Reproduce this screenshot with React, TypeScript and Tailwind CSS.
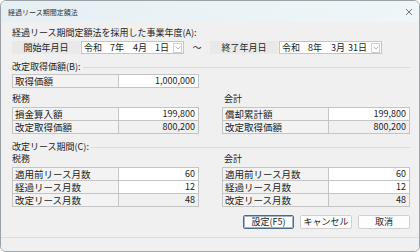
import React from "react";

const jp = { fontFamily: '"Noto Sans CJK JP", "Noto Sans", sans-serif' };

function Row({ label, value, ro, last }: { label: string; value: string; ro?: boolean; last?: boolean }) {
  return (
    <div className="flex h-[13px] border-b border-[#c4c4c4]">
      <div className="w-[106px] shrink-0 border-r border-[#c4c4c4] bg-[#f3f3f3] pl-[2px] text-[9.5px] leading-[12px] text-[#222]">{label}</div>
      <div className={"flex-1 pr-[3px] text-right text-[9px] leading-[12px] text-[#222] " + (ro ? "bg-[#f0f0f0]" : "bg-white")}>{value}</div>
    </div>
  );
}

function Table({ rows }: { rows: { label: string; value: string; ro?: boolean }[] }) {
  return (
    <div className="border-t border-x border-[#c4c4c4]">
      {rows.map((r, i) => (
        <Row key={i} {...r} />
      ))}
    </div>
  );
}

function GroupHeader({ text }: { text: string }) {
  return (
    <div className="flex h-[12px] items-center">
      <span className="text-[9px] leading-[12px] text-[#222]">{text}</span>
      <div className="ml-[2px] h-px flex-1 bg-[#dadada]" />
    </div>
  );
}

function DateBox({ y, m, d }: { y: string; m: string; d: string }) {
  return (
    <div className="flex h-[13px] w-[103px] items-center border border-[#c4c4c4] bg-white text-[9px] leading-[11px] text-[#222]">
      <span className="ml-[2px] w-[22px]">令和</span>
      <span className="w-[18px] whitespace-pre text-right">{y}年</span>
      <span className="w-[23px] whitespace-pre text-right">{m}月</span>
      <span className="w-[22px] whitespace-pre text-right">{d}日</span>
      <div className="ml-auto mr-[1px] flex h-[10px] w-[9px] items-center justify-center border border-[#cfcfcf] bg-white">
        <svg width="6" height="4" viewBox="0 0 6 4">
          <path d="M0.5 0.5 L3 3 L5.5 0.5" fill="none" stroke="#a0a0a0" strokeWidth="0.8" />
        </svg>
      </div>
    </div>
  );
}

function Label({ text }: { text: string }) {
  return (
    <div className="flex h-[13px] w-[68px] items-center justify-center bg-[#e9e9e9] text-[9px] leading-[12px] text-[#222]">
      {text}
    </div>
  );
}

export default function App() {
  return (
    <div style={jp} className="flex h-[252px] w-[420px] flex-col overflow-hidden rounded-[6px] border border-[#9aa2a8] bg-[#f0f0f0]">
      <div className="flex h-[21px] shrink-0 items-center justify-between bg-gradient-to-r from-[#e6eff3] to-[#eef6f8] pl-[7px] pr-[6px]">
        <span className="text-[7px] leading-[10px] text-[#333]">経過リース期間定額法</span>
        <svg width="8" height="8" viewBox="0 0 8 8">
          <path d="M1 1 L7 7 M7 1 L1 7" stroke="#555" strokeWidth="0.8" />
        </svg>
      </div>
      <div className="flex flex-1 flex-col pl-[11px] pr-[9px]">
        <div className="mt-[5px] h-[12px] text-[9px] leading-[12px] text-[#222]">経過リース期間定額法を採用した事業年度(A):</div>
        <div className="mt-[2px] flex h-[13px] items-center">
          <Label text="開始年月日" />
          <div className="w-px" />
          <DateBox y="7" m="4" d="1" />
          <div className="flex w-[26px] justify-center text-[9px] leading-[12px] text-[#222]">〜</div>
          <Label text="終了年月日" />
          <div className="w-px" />
          <DateBox y="8" m="3" d="31" />
        </div>
        <div className="mt-[7px]">
          <GroupHeader text="改定取得価額(B):" />
        </div>
        <div className="mt-[1px] w-[187px]">
          <Table rows={[{ label: "取得価額", value: "1,000,000" }]} />
        </div>
        <div className="mt-[5px] flex gap-[23px]">
          <div className="w-[187px]">
            <div className="h-[12px] text-[9px] leading-[12px] text-[#222]">税務</div>
            <div className="mt-[2px]">
              <Table rows={[{ label: "損金算入額", value: "199,800" }, { label: "改定取得価額", value: "800,200", ro: true }]} />
            </div>
          </div>
          <div className="w-[188px]">
            <div className="h-[12px] pl-[2px] text-[9px] leading-[12px] text-[#222]">会計</div>
            <div className="mt-[2px]">
              <Table rows={[{ label: "償却累計額", value: "199,800" }, { label: "改定取得価額", value: "800,200", ro: true }]} />
            </div>
          </div>
        </div>
        <div className="mt-[7px]">
          <GroupHeader text="改定リース期間(C):" />
        </div>
        <div className="flex gap-[23px]">
          <div className="w-[187px]">
            <div className="h-[12px] text-[9px] leading-[12px] text-[#222]">税務</div>
            <div className="mt-[2px]">
              <Table rows={[{ label: "適用前リース月数", value: "60" }, { label: "経過リース月数", value: "12" }, { label: "改定リース月数", value: "48", ro: true }]} />
            </div>
          </div>
          <div className="w-[188px]">
            <div className="h-[12px] pl-[2px] text-[9px] leading-[12px] text-[#222]">会計</div>
            <div className="mt-[2px]">
              <Table rows={[{ label: "適用前リース月数", value: "60" }, { label: "経過リース月数", value: "12" }, { label: "改定リース月数", value: "48", ro: true }]} />
            </div>
          </div>
        </div>
        <div className="mt-[8px] flex justify-end gap-[6px]">
          <button className="flex h-[14px] w-[51px] items-center justify-center rounded-[2px] border border-[#4a6a8a] bg-[#fdfdfd] text-[9px] leading-[12px] text-[#222] outline outline-1 -outline-offset-2 outline-[#9fb4c8]">設定(F5)</button>
          <button className="flex h-[14px] w-[52px] items-center justify-center rounded-[2px] border border-[#d0d0d0] bg-[#fdfdfd] text-[9px] leading-[12px] text-[#222]">キャンセル</button>
          <button className="flex h-[14px] w-[52px] items-center justify-center rounded-[2px] border border-[#d0d0d0] bg-[#fdfdfd] text-[9px] leading-[12px] text-[#222]">取消</button>
        </div>
      </div>
      <div className="h-[14px] shrink-0 border-t border-[#dcdcdc] bg-[#f0f0f0]" />
    </div>
  );
}
